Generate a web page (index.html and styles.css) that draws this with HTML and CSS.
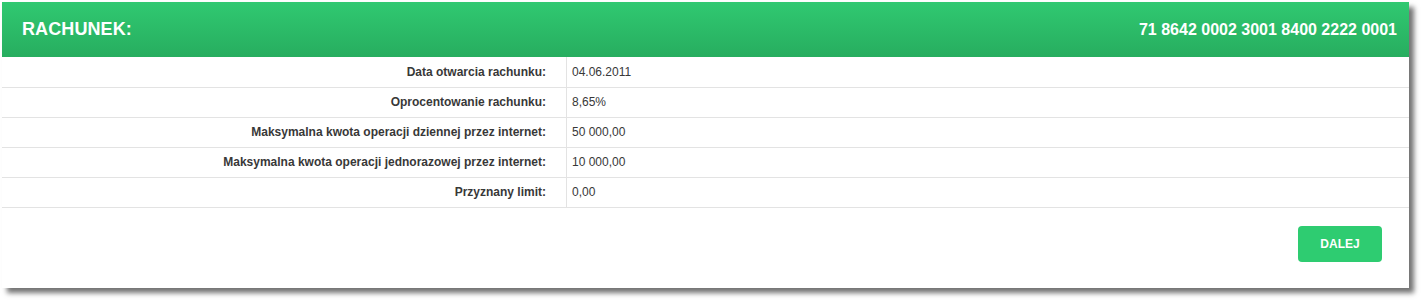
FILE: index.html
```html
<!DOCTYPE html>
<html lang="pl">
<head>
    <meta charset="UTF-8">
    <title>Rachunek</title>
    <link rel="stylesheet" href="styles.css">
</head>
<body>

<div class="panel">
    <div class="panel-header">
        <span class="panel-title">RACHUNEK:</span>
        <span>71 8642 0002 3001 8400 2222 0001</span>
    </div>
    <table class="details">
        <tr>
            <th>Data otwarcia rachunku:</th>
            <td>04.06.2011</td>
        </tr>
        <tr>
            <th>Oprocentowanie rachunku:</th>
            <td>8,65%</td>
        </tr>
        <tr>
            <th>Maksymalna kwota operacji dziennej przez internet:</th>
            <td>50 000,00</td>
        </tr>
        <tr>
            <th>Maksymalna kwota operacji jednorazowej przez internet:</th>
            <td>10 000,00</td>
        </tr>
        <tr>
            <th>Przyznany limit:</th>
            <td>0,00</td>
        </tr>
    </table>
    <div class="actions">
        <button class="btn">DALEJ</button>
    </div>
</div>

</body>
</html>
```

FILE: styles.css
```css
body {
    font-family: 'Liberation Sans', Arial, sans-serif;
    background-color: #fff;
    margin: 0;
    padding: 2px 0 0 2px;
    min-height: 100vh;
    box-sizing: border-box;
}

/* Panel with drop shadow */
.panel {
    width: 1407px;
    height: 286px;
    background-color: #fff;
    box-shadow: 5px 5px 5px rgba(0, 0, 0, 0.55);
    display: flex;
    flex-direction: column;
}

.panel-header {
    height: 55px;
    padding: 0 12px 0 20px;
    background: linear-gradient(#30c971, #27ad5f);
    color: #fff;
    font-size: 16px;
    font-weight: bold;
    display: flex;
    align-items: center;
    justify-content: space-between;
}

.panel-title {
    font-size: 18px;
    letter-spacing: 0.1px;
}

.details {
    width: 100%;
    border-collapse: collapse;
    font-size: 12px;
    color: #383838;
}

.details tr {
    height: 30px;
    border-bottom: 1px solid #e3e3e3;
}

.details th {
    width: 544px;
    padding: 0 20px 0 0;
    text-align: right;
    font-weight: bold;
    border-right: 1px solid #e3e3e3;
}

.details td {
    padding: 0 0 0 5px;
}

.actions {
    display: flex;
    justify-content: flex-end;
    padding: 18px 27px 0 0;
}

.btn {
    width: 84px;
    height: 36px;
    background-color: #2ecc71;
    color: #fff;
    border: none;
    border-radius: 4px;
    font-family: inherit;
    font-size: 12px;
    font-weight: bold;
    cursor: pointer;
}
```
